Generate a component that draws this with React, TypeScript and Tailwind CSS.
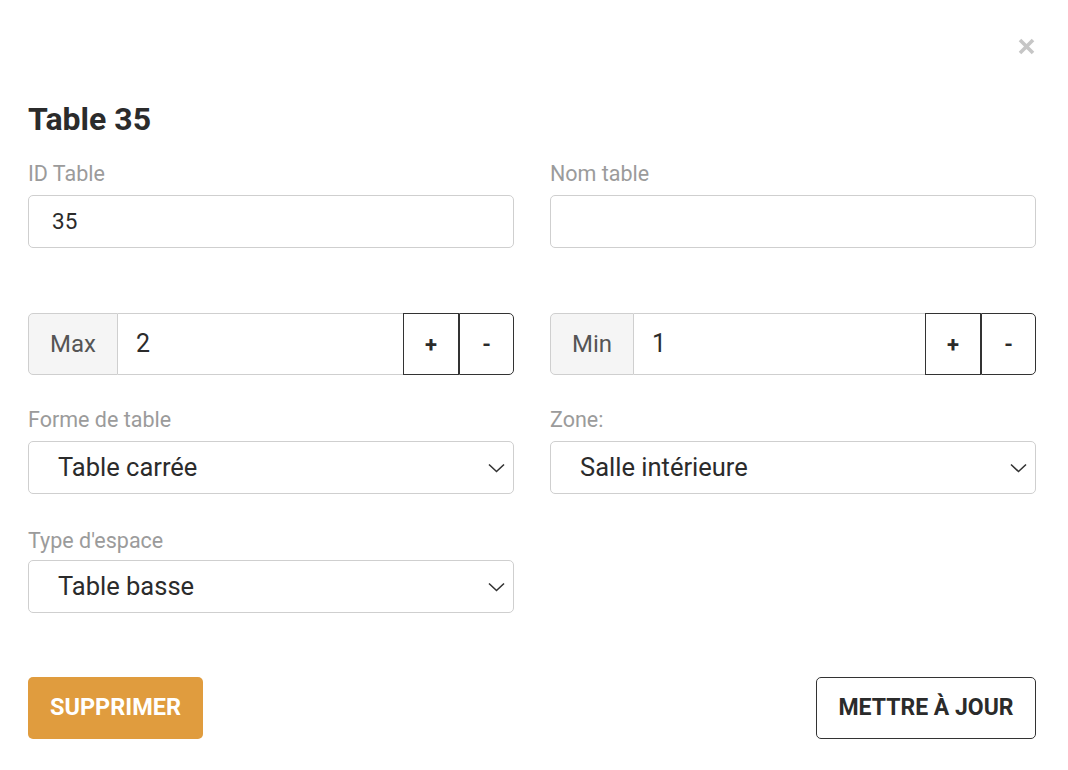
import React from "react";

const Chevron = () => (
  <svg width="17" height="10" viewBox="0 0 17 10" fill="none" className="absolute right-[8px] top-1/2 -translate-y-1/2">
    <path d="M1 1.5 L8.5 8.5 L16 1.5" stroke="#333" strokeWidth="1.6" />
  </svg>
);

function Label({ children, className = "" }: { children: React.ReactNode; className?: string }) {
  return <div className={`h-[24px] leading-[24px] text-[21.5px] text-[#9b9b9b] ${className}`}>{children}</div>;
}

function Select({ value }: { value: string }) {
  return (
    <div className="relative h-[53px] rounded-[5px] border border-[#cfcfcf] flex items-center pl-[29px] text-[25.5px] text-[#2b2b2b]">
      {value}
      <Chevron />
    </div>
  );
}

function Stepper({ label, value, addonW }: { label: string; value: string; addonW: string }) {
  return (
    <div className="flex h-[62px]">
      <div className={`${addonW} flex items-center justify-center bg-[#f5f5f5] border border-[#cfcfcf] rounded-l-[5px] text-[24px] text-[#555]`}>
        {label}
      </div>
      <div className="flex-1 flex items-center pl-[18px] border-y border-[#cfcfcf] text-[25px] text-[#2b2b2b]">{value}</div>
      <div className="w-[56px] flex items-center justify-center border border-[#333] text-[22px] font-bold text-[#2b2b2b]">+</div>
      <div className="w-[55px] flex items-center justify-center border border-l-0 border-[#333] border-l-[1px] rounded-r-[5px] text-[22px] font-bold text-[#2b2b2b]">-</div>
    </div>
  );
}

export default function App() {
  return (
    <div className="relative w-[1068px] h-[770px] bg-white pl-[28px] pr-[32px] pt-[101px]" style={{ fontFamily: "Roboto, 'Noto Sans', sans-serif" }}>
      <div className="absolute top-[34px] right-[32px] w-[20px] h-[24px] flex items-center justify-center">
        <svg width="17" height="17" viewBox="0 0 17 17">
          <path d="M2 2 L15 15 M15 2 L2 15" stroke="#c6c6c6" strokeWidth="3.6" />
        </svg>
      </div>
      <h1 className="h-[36px] leading-[36px] text-[32px] font-bold text-[#2b2b2b]">Table 35</h1>

      <div className="grid grid-cols-2 gap-x-[36px] mt-[25px]">
        <div>
          <Label>ID Table</Label>
          <div className="mt-[9px] h-[53px] rounded-[5px] border border-[#cfcfcf] flex items-center pl-[23px] text-[22.5px] text-[#2b2b2b]">35</div>
        </div>
        <div>
          <Label>Nom table</Label>
          <div className="mt-[9px] h-[53px] rounded-[5px] border border-[#cfcfcf]"></div>
        </div>
      </div>

      <div className="grid grid-cols-2 gap-x-[36px] mt-[65px]">
        <Stepper label="Max" value="2" addonW="w-[90px]" />
        <Stepper label="Min" value="1" addonW="w-[84px]" />
      </div>

      <div className="grid grid-cols-2 gap-x-[36px] mt-[33px]">
        <div>
          <Label>Forme de table</Label>
          <div className="mt-[9px]">
            <Select value="Table carrée" />
          </div>
        </div>
        <div>
          <Label>Zone:</Label>
          <div className="mt-[9px]">
            <Select value="Salle intérieure" />
          </div>
        </div>
      </div>

      <div className="grid grid-cols-2 gap-x-[36px] mt-[35px]">
        <div>
          <Label>Type d'espace</Label>
          <div className="mt-[7px]">
            <Select value="Table basse" />
          </div>
        </div>
      </div>

      <div className="flex justify-between mt-[64px]">
        <button className="h-[62px] w-[175px] rounded-[5px] bg-[#e09c3e] text-white text-[23.5px] font-bold">SUPPRIMER</button>
        <button className="h-[62px] w-[220px] rounded-[5px] border border-[#333] bg-white text-[#2b2b2b] text-[23px] font-bold">METTRE À JOUR</button>
      </div>
    </div>
  );
}
